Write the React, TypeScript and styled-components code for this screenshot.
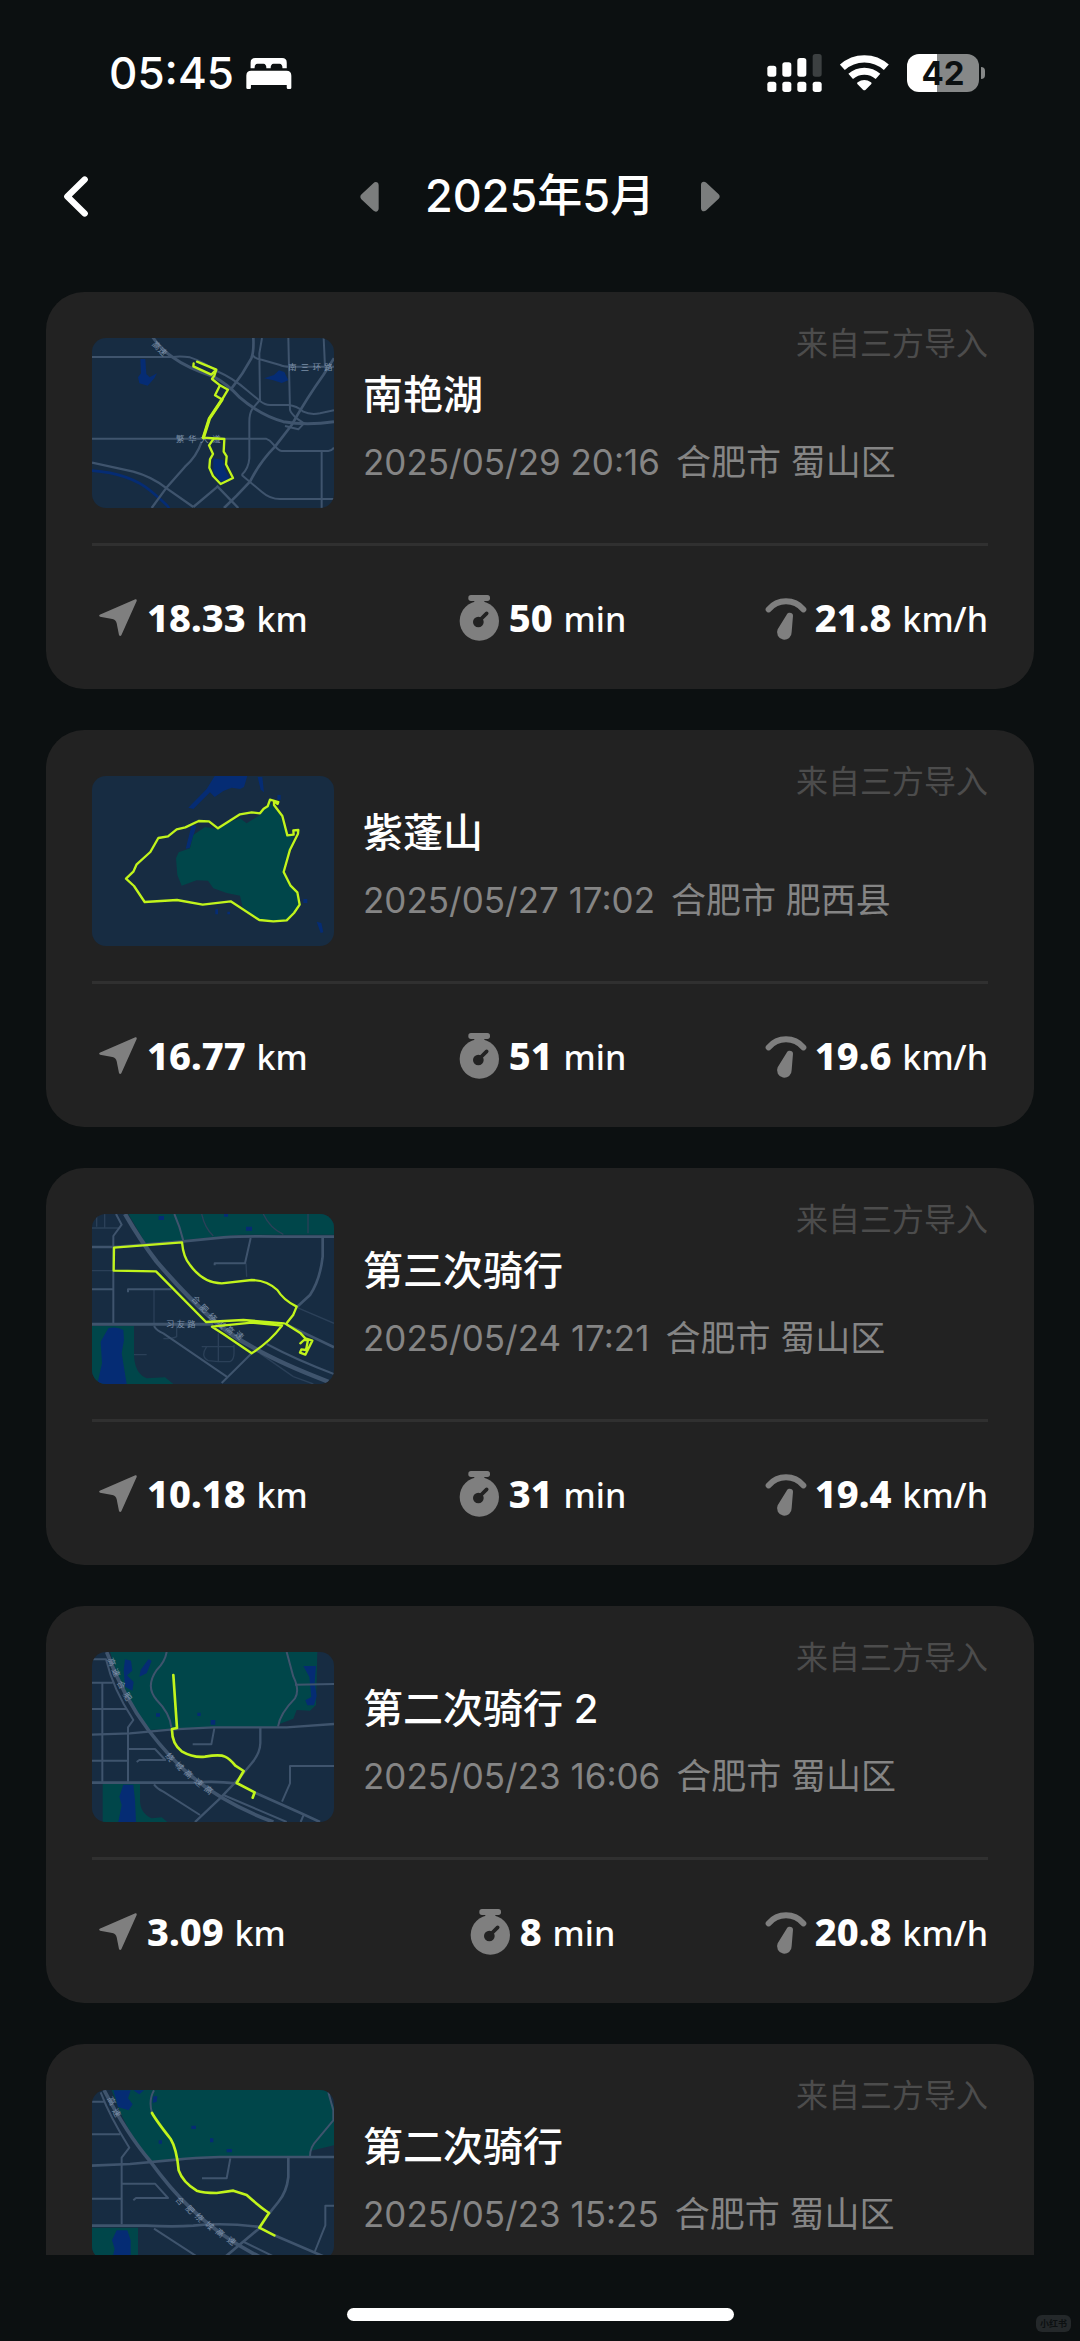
import React from "react";
import styled, { createGlobalStyle } from "styled-components";

const GlobalStyle = createGlobalStyle`
  *, *::before, *::after { box-sizing: border-box; }
  body {
    margin: 0;
    background: #0c1011;
    color: #fff;
    font-family: Inter, "Noto Sans CJK SC", sans-serif;
  }
  h1, h2, p, ul { margin: 0; padding: 0; }
  button { border: 0; background: none; padding: 0; color: inherit; font: inherit; cursor: pointer; }
  svg { display: block; }
`;

const Screen = styled.div`
  display: flex;
  flex-direction: column;
  height: 100vh;
`;

const StatusBar = styled.div`
  display: flex;
  align-items: center;
  justify-content: space-between;
  flex: none;
  height: 146px;
  padding: 0 95px 0 109px;
`;

const StatusGroup = styled.div<{ $gap: number }>`
  display: flex;
  align-items: center;
  gap: ${(p) => p.$gap}px;
`;

const Clock = styled.time`
  font-size: 44px;
  line-height: 56px;
  font-weight: 500;
`;

const Battery = styled.div`
  display: flex;
  align-items: center;
  gap: 2px;
`;

const BatteryBody = styled.div<{ $level: number }>`
  width: 72px;
  height: 38px;
  border-radius: 12px;
  background: linear-gradient(to right, #fff ${(p) => p.$level}%, #868888 ${(p) => p.$level}%);
  color: #0c1011;
  font-size: 33px;
  line-height: 38px;
  font-weight: 700;
  text-align: center;
`;

const BatteryTip = styled.div`
  width: 4px;
  height: 12px;
  border-radius: 0 6px 6px 0;
  background: #868888;
`;

const Header = styled.header`
  display: grid;
  grid-template-columns: 1fr auto 1fr;
  align-items: center;
  flex: none;
  height: 100px;
  padding: 0 46px;
`;

const IconButton = styled.button`
  display: flex;
  align-items: center;
  justify-content: center;
  width: 60px;
  height: 60px;
`;

const MonthNav = styled.div`
  display: flex;
  align-items: center;
  gap: 25px;
`;

const Month = styled.h1`
  font-size: 45px;
  line-height: 60px;
  font-weight: 500;
`;

const RideList = styled.ul`
  flex: 1;
  min-height: 0;
  overflow-y: auto;
  scrollbar-width: none;
  list-style: none;
  display: flex;
  flex-direction: column;
  gap: 41px;
  padding: 46px 46px 0;
`;

const Card = styled.li`
  flex: none;
  padding: 32px 46px 0;
  border-radius: 38px;
  background: #222;
`;

const CardTop = styled.div`
  display: flex;
  gap: 29px;
  padding-bottom: 35px;
  border-bottom: 3px solid #303030;
`;

const MapThumb = styled.svg`
  flex: none;
  width: 242px;
  height: 170px;
  margin-top: 14px;
  border-radius: 14px;
  background: #172c42;
`;

const MapLabel = styled.text`
  fill: #7d90a8;
  font-family: "Noto Sans CJK SC", sans-serif;
  font-size: 25px;
`;

const Info = styled.div`
  flex: 1;
  display: flex;
  flex-direction: column;
`;

const Source = styled.p`
  align-self: flex-end;
  color: #4c4c4c;
  font-size: 32px;
  line-height: 40px;
`;

const RideName = styled.h2`
  font-size: 40px;
  line-height: 62px;
  font-weight: 500;
`;

const Meta = styled.p`
  display: flex;
  gap: 16px;
  color: #858585;
  font-size: 35px;
  line-height: 72px;
  font-weight: 400;
`;

const Stats = styled.div`
  display: grid;
  grid-template-columns: repeat(3, 1fr);
  align-items: center;
  height: 143px;
`;

const Stat = styled.div<{ $align: string }>`
  display: flex;
  align-items: center;
  justify-content: ${(p) => p.$align};
  gap: 7px;
  font-family: "Noto Sans", sans-serif;
  font-size: 34px;
  line-height: 48px;
  font-weight: 500;
  white-space: pre;
`;

const Value = styled.strong`
  margin-right: 2px;
  font-size: 38px;
  font-weight: 800;
`;

const Footer = styled.footer`
  display: grid;
  grid-template-columns: 1fr 387px 1fr;
  align-items: end;
  flex: none;
  height: 86px;
  padding: 0 9px;
`;

const HomeIndicator = styled.div`
  grid-column: 2;
  height: 13px;
  margin-bottom: 20px;
  border-radius: 7px;
  background: #fff;
`;

const Watermark = styled.span`
  justify-self: end;
  margin-bottom: 9px;
  padding: 0 4px;
  border-radius: 6px;
  background: #24282a;
  color: #0c1011;
  font-size: 9px;
  line-height: 17px;
  font-weight: 700;
`;

const BedIcon = () => (
  <svg width="46" height="33" viewBox="620 114 140 98" fill="#fff" aria-hidden="true">
    <path d="M634 147v-17q0-14 14-14h82q14 0 14 14v17h-13q0-14-9-14h-18q-9 0-9 14h-13q0-14-9-14h-18q-9 0-9 14z" />
    <path d="M621 206v-36q0-15 15-15h107q15 0 15 15v36q0 4-4 4h-6q-4 0-4-4v-8H635v8q0 4-4 4h-6q-4 0-4-4z" />
  </svg>
);

const SignalIcon = () => (
  <svg width="55" height="38" viewBox="620 100 165 114" fill="#fff" aria-hidden="true">
    <rect x="621" y="135" width="27" height="33" rx="8" />
    <rect x="666" y="125" width="27" height="43" rx="8" />
    <rect x="711" y="112" width="27" height="56" rx="8" />
    <rect x="757" y="100" width="27" height="68" rx="8" fill="#3c4041" />
    <rect x="621" y="183" width="27" height="31" rx="8" />
    <rect x="666" y="183" width="27" height="31" rx="8" />
    <rect x="711" y="183" width="27" height="31" rx="8" />
    <rect x="757" y="183" width="27" height="31" rx="8" />
  </svg>
);

const WifiIcon = () => (
  <svg width="49" height="38" viewBox="840 100 147 114" fill="none" aria-hidden="true">
    <path d="M847 140A98 98 0 0 1 979 140" stroke="#fff" strokeWidth="22" />
    <path d="M872 167A62 62 0 0 1 954 167" stroke="#fff" strokeWidth="21" />
    <path d="M909 207L892 190Q890 187 893 185A36 36 0 0 1 933 185Q936 187 934 190L917 207Q913 211 909 207Z" fill="#fff" />
  </svg>
);

const BackIcon = () => (
  <svg width="24" height="41" viewBox="70 470 72 122" fill="none" aria-hidden="true">
    <path d="M132 480L80 531L132 582" stroke="#fff" strokeWidth="19" strokeLinecap="round" strokeLinejoin="round" />
  </svg>
);

const PrevIcon = () => (
  <svg width="19" height="31" viewBox="964 476 57 92" fill="#7b7d7d" aria-hidden="true">
    <path d="M1020 488v70c0 10-10 12-16 6l-36-34c-4-4-4-10 0-14l36-34c6-6 16-4 16 6z" />
  </svg>
);

const NextIcon = () => (
  <svg width="19" height="31" viewBox="427 484 57 92" fill="#7b7d7d" aria-hidden="true">
    <path d="M427 495v70c0 10 10 12 16 6l37-34c4-4 4-10 0-14l-37-34c-6-6-16-4-16 6z" />
  </svg>
);

const DistanceIcon = () => (
  <svg width="48" height="48" viewBox="156 942 144 144" fill="#7f7f7f" aria-hidden="true">
    <path d="M179 1004L286 958Q292 957 290 963L244 1066Q240 1071 237 1065L230 1030Q228 1019 217 1017L180 1010Q175 1007 179 1004Z" />
  </svg>
);

const TimerIcon = () => (
  <svg width="48" height="48" viewBox="1251 942 144 144" aria-hidden="true">
    <rect x="1294" y="945" width="65" height="18" rx="8" fill="#7f7f7f" />
    <path d="M1312 960H1342V975H1312Z" fill="#7f7f7f" />
    <circle cx="1327" cy="1023" r="59" fill="#7f7f7f" />
    <circle cx="1324" cy="1026" r="16" fill="#222" />
    <path d="M1326 1023L1349 1000" stroke="#222" strokeWidth="11" strokeLinecap="round" />
  </svg>
);

const SpeedIcon = () => (
  <svg width="48" height="48" viewBox="594 942 144 144" aria-hidden="true">
    <path d="M620 988A68 68 0 0 1 724 988" fill="none" stroke="#7f7f7f" strokeWidth="18" strokeLinecap="round" />
    <path d="M674 1004C678 995 694 998 693 1007L689 1056A22 22 0 1 1 647 1048Z" fill="#7f7f7f" />
  </svg>
);

const ROAD = "#3f546d";
const MINOR = "#2b4058";
const WATER = "#052c74";
const PARK = "#00464a";
const ROUTE = "#c1f41c";

const Roads = ({ d, w, color = ROAD }: { d: string; w: number; color?: string }) => (
  <path d={d} fill="none" stroke={color} strokeWidth={w} strokeLinejoin="round" />
);

const Route = ({ d, w = 8 }: { d: string; w?: number }) => (
  <path d={d} fill="none" stroke={ROUTE} strokeWidth={w} strokeLinejoin="round" strokeLinecap="round" />
);

const ExpresswayLabel = ({ chars, points }: { chars: string; points: number[][] }) => (
  <>
    {points.map(([x, y, angle], i) => (
      <MapLabel key={i} x={x} y={y + 9} textAnchor="middle" transform={`rotate(${angle} ${x} ${y})`}>
        {chars[i]}
      </MapLabel>
    ))}
  </>
);

const NanyanLakeMap = () => (
  <MapThumb viewBox="36 39 726 510" role="img" aria-label="南艳湖路线">
    <path d="M181 102h15l3 45l10 10l22-12l-8 15l-20 22l-25-7l-4-18l9-12z" fill={WATER} />
    <path d="M552 160l30-10l15-14l16 5l12 25l-20 8l-25-8z" fill={WATER} />
    <path d="M400 400l30 5l5 30l15 28l-28 8l-22-30z" fill={WATER} />
    <Roads w={8} color={WATER} d="M36 437Q150 445 215 500T262 549" />
    <Roads w={6} d="M36 96H278M278 96Q300 92 330 97Q370 110 410 138Q460 160 500 195L540 228Q555 240 570 240H625Q650 242 670 260Q690 270 720 265L762 256" />
    <Roads w={9} d="M218 36Q240 70 278 97Q320 128 400 155Q440 175 480 218Q540 270 610 290Q680 302 762 290" />
    <Roads w={8} d="M520 39Q522 80 514 100Q490 145 455 190M762 100L730 150Q680 220 635 300L585 365Q540 410 510 470L470 512L432 549" />
    <Roads w={6} d="M546 39L538 85L540 225L518 250Q508 265 508 290V400Q506 430 485 450M518 90Q525 102 545 104L600 120Q610 125 630 125H762M625 39L630 255Q633 265 650 280L672 295L655 313L615 303M731 39L735 125" />
    <Roads w={6} d="M36 341H558Q570 345 580 358Q595 377 605 378H745Q755 378 762 368M725 378V549M485 450L545 500Q570 522 600 522H762" />
    <Roads w={7} d="M36 413Q90 425 160 440Q215 455 260 490L340 546M365 350Q350 395 315 425L258 490L215 549M410 487L340 546M410 482L475 549" />
    <MapLabel x="625 662 698 733" y="134">南三环路</MapLabel>
    <MapLabel x="288 325 361 397" y="350">繁华大道</MapLabel>
    <ExpresswayLabel chars="高速" points={[[230, 62, 45], [248, 80, 45]]} />
    <Route w={7} d="M351 110L409 134L403 152L396 162L420 181L444 194L426 224L388 281L370 338L433 342L431 380L440 394L438 418L459 459L422 477L399 453L388 428L390 403L399 387L387 361L399 344M341 115L340 124L394 149L409 134M420 181L405 211L424 222" />
    <Route w={10} d="M426 224L388 281L370 338" />
  </MapThumb>
);

const ZipengMountainMap = () => (
  <MapThumb viewBox="36 33 726 510" role="img" aria-label="紫蓬山路线">
    <path d="M404 33H502L492 66L480 72L455 68L430 78L404 96L390 82L340 132L325 128L380 72Z" fill={WATER} />
    <path d="M533 36h14l5 46l-10-8zM335 180l14 4l-20 65l-12 2zM710 470l14 4l6 28l-8 2zM406 432h8v16h-8zM442 440h8v8h-8zM670 402h12v12h-12zM592 90h10v14h-10z" fill={WATER} />
    <path d="M570 112L600 150L620 210L640 212L612 322L632 362L652 382L658 420L620 466L580 469L538 465L488 426L480 392L440 384L400 370L384 347L350 346L305 362L292 330L288 280L296 262L330 250L340 210L375 186L412 192L440 175L480 160L500 175L540 150Z" fill={PARK} />
    <Route w={7} d="M570 104L595 111L593 117L582 108V120L607 153L622 211L641 209L640 196L655 195L654 206L630 254L611 321L631 361L652 382L659 419L642 444L620 466L580 469L538 465L452 409L368 419L291 405L194 411L162 363L138 341L160 320L170 298L211 261L235 219L264 214L290 193L316 187L356 168L387 169L414 190L480 148L515 142L540 145L551 131L563 124Z" />
  </MapThumb>
);

const ThirdRideMap = () => (
  <MapThumb viewBox="36 42 726 510" role="img" aria-label="第三次骑行路线">
    <path d="M145 42H762V104H480L310 120L200 136Z" fill={PARK} />
    <path d="M36 378H162V460Q162 520 200 535L255 532L280 552H36Z" fill={PARK} />
    <path d="M85 385Q110 378 130 390L132 420L125 460L140 552H52L66 490L62 425Z" fill={WATER} />
    <path d="M236 48h16v12h-16zM498 80h18v12h-18zM432 42h12v8h-12z" fill={WATER} />
    <Roads w={4} color={MINOR} d="M365 42Q375 85 400 108M550 42Q570 85 610 103M684 42V100M36 84H115M74 42V84M50 42V80M36 212H100M222 268V372M162 464H200M290 370V410Q280 416 250 416M365 440H462M415 400V485H450Q462 480 462 460V435M380 440Q360 470 385 482L415 485M650 322L762 370M498 190L500 230M540 460L640 530L700 552" />
    <Roads w={8} d="M36 141H103L310 124L430 112Q500 108 600 110H762" />
    <Roads w={13} d="M135 42Q180 120 230 185Q320 290 400 360Q450 405 515 440Q600 490 745 545" />
    <Roads w={6} d="M108 42L125 74L100 108V370M36 268H100M144 277V268H275M283 42Q300 80 310 122M404 196V190H495L512 114M222 378Q230 392 250 400L440 530M515 460L425 549M560 432Q650 480 762 522" />
    <Roads w={8} d="M728 114V170Q720 240 690 285L650 322M620 374L762 442" />
    <Roads w={9} d="M36 373H400" />
    <MapLabel x="258 290 322" y="381">习友路</MapLabel>
    <ExpresswayLabel chars="合肥绕城高速" points={[[348, 300, 45], [372, 326, 45], [398, 352, 45], [424, 374, 45], [450, 390, 45], [478, 406, 45]]} />
    <Route w={7} d="M102 143L306 127Q310 172 330 195Q370 250 425 250Q470 245 515 240Q560 240 592 270Q610 300 650 320L640 344L618 372L662 400L676 415L697 422L676 464L660 458L664 448L678 450L684 420L672 420L661 430M102 143L101 212L228 214L378 366L490 360L612 370M396 380L515 368L606 377Q570 425 515 460L430 402Z" />
  </MapThumb>
);

const SecondRideTwoMap = () => (
  <MapThumb viewBox="36 36 726 510" role="img" aria-label="第二次骑行 2 路线">
    <path d="M90 36H712L708 195L690 212L650 210L640 236L598 252L590 262L400 262L205 270Q130 170 90 36Z" fill={PARK} />
    <path d="M68 432H180V480Q180 520 215 535L245 532L262 546H68Z" fill={PARK} />
    <path d="M130 434H160L165 480L168 546H115L125 495L118 470Z" fill={WATER} />
    <path d="M135 58l18 4l4 30l-16 14l20 20l-4 26l-22-12l-4-50zM205 58l10 4l-15 38l-22 10l4-20zM670 78h38l-4 50l6 40l-8 28h-20l-6-15l18-10l-6-60zM228 220h12v10h-12zM392 240h14v14h-14zM352 218h10v10h-10z" fill={WATER} />
    <Roads w={6} d="M36 58H78Q100 150 160 240L144 262V425M36 128H98M36 207H142M67 128V425M36 362H144M144 327H225L256 360H178L170 366M338 313H394L403 265M260 36Q255 65 230 90Q195 140 230 180Q270 220 274 262M620 36L640 110Q660 150 645 175Q600 220 594 260M645 134L762 132M762 378H630V430L606 485M222 433Q230 445 250 455L360 525M430 465L540 512L620 546M672 522L662 546" />
    <Roads w={7} d="M36 284L150 280L280 268L400 262H620L762 252M541 265V310Q540 340 515 370L480 412L420 475L345 546" />
    <Roads w={11} d="M80 36Q130 170 205 270Q270 355 330 405Q430 490 580 546" />
    <Roads w={8} d="M36 428H340Q400 422 470 430M520 456L660 518L720 546" />
    <ExpresswayLabel chars="高速合肥绕城高速高" points={[[95, 66, 68], [108, 98, 66], [124, 134, 62], [142, 170, 60], [270, 352, 50], [298, 378, 48], [326, 402, 45], [356, 428, 40], [386, 450, 38]]} />
    <Route d="M280 105L291 264L276 267Q275 310 305 334Q340 354 375 350Q420 342 435 350Q450 357 466 377L491 393L470 429L524 457L518 473" />
  </MapThumb>
);

const SecondRideMap = () => (
  <MapThumb viewBox="36 29 726 510" role="img" aria-label="第二次骑行路线">
    <path d="M95 29H740L762 80V195L690 212V228L400 230L210 242Q130 140 95 29Z" fill={PARK} />
    <path d="M36 442H174V539H36Z" fill={PARK} />
    <path d="M110 450H142L152 480V539H96L104 505L96 480Z" fill={WATER} />
    <path d="M100 30h52l-8 24l14 18l-12 18l-32-10zM160 30h32l-14 12zM220 48h12l-2 16l-12 4zM334 136h14v10h-14zM390 174h10v12h-10zM440 206h16v10h-16zM236 180h10v10h-10z" fill={WATER} />
    <Roads w={6} d="M36 64H72M62 36Q90 110 148 202L125 232V432M36 162H120M36 355H125M125 310H225L264 353H168L160 360M366 294H440L451 234M222 30Q205 60 216 98M745 36L760 90V120L710 180Q690 200 690 228M762 376H736V435L704 515M222 445L350 528M492 485L580 528" />
    <Roads w={8} d="M36 256L150 251L290 238Q340 232 420 230L762 230M625 232V290Q620 335 595 365L567 400M540 442L435 530M36 436H200Q280 440 340 436Q430 426 540 440M583 465L735 530" />
    <Roads w={11} d="M72 29Q140 160 210 242Q270 325 330 382Q420 470 540 530" />
    <ExpresswayLabel chars="高速合肥绕城高速" points={[[95, 62, 62], [110, 97, 62], [300, 362, 50], [330, 388, 46], [358, 412, 45], [388, 436, 42], [420, 458, 40], [454, 482, 38]]} />
    <Route d="M216 98Q228 120 272 176Q290 205 296 270Q308 305 350 331Q370 338 410 338L460 331L500 344Q540 380 567 398L538 442L583 465" />
  </MapThumb>
);

interface RideStats {
  distance: string;
  minutes: string;
  speed: string;
}

interface Ride {
  name: string;
  time: string;
  city: string;
  district: string;
  stats?: RideStats;
  map: React.ComponentType;
}

const rides: Ride[] = [
  { name: "南艳湖", time: "2025/05/29 20:16", city: "合肥市", district: "蜀山区", stats: { distance: "18.33", minutes: "50", speed: "21.8" }, map: NanyanLakeMap },
  { name: "紫蓬山", time: "2025/05/27 17:02", city: "合肥市", district: "肥西县", stats: { distance: "16.77", minutes: "51", speed: "19.6" }, map: ZipengMountainMap },
  { name: "第三次骑行", time: "2025/05/24 17:21", city: "合肥市", district: "蜀山区", stats: { distance: "10.18", minutes: "31", speed: "19.4" }, map: ThirdRideMap },
  { name: "第二次骑行 2", time: "2025/05/23 16:06", city: "合肥市", district: "蜀山区", stats: { distance: "3.09", minutes: "8", speed: "20.8" }, map: SecondRideTwoMap },
  { name: "第二次骑行", time: "2025/05/23 15:25", city: "合肥市", district: "蜀山区", map: SecondRideMap },
];

const RideCard = ({ ride }: { ride: Ride }) => {
  const RideMap = ride.map;
  return (
    <Card>
      <CardTop>
        <RideMap />
        <Info>
          <Source>来自三方导入</Source>
          <RideName>{ride.name}</RideName>
          <Meta>
            <time>{ride.time}</time>
            <span>{ride.city} {ride.district}</span>
          </Meta>
        </Info>
      </CardTop>
      {ride.stats && (
        <Stats>
          <Stat $align="flex-start">
            <DistanceIcon />
            <span><Value>{ride.stats.distance}</Value> km</span>
          </Stat>
          <Stat $align="center">
            <TimerIcon />
            <span><Value>{ride.stats.minutes}</Value> min</span>
          </Stat>
          <Stat $align="flex-end">
            <SpeedIcon />
            <span><Value>{ride.stats.speed}</Value> km/h</span>
          </Stat>
        </Stats>
      )}
    </Card>
  );
};

export default function App() {
  return (
    <>
      <GlobalStyle />
      <Screen>
        <StatusBar>
          <StatusGroup $gap={12}>
            <Clock>05:45</Clock>
            <BedIcon />
          </StatusGroup>
          <StatusGroup $gap={18}>
            <SignalIcon />
            <WifiIcon />
            <Battery>
              <BatteryBody $level={42}>42</BatteryBody>
              <BatteryTip />
            </Battery>
          </StatusGroup>
        </StatusBar>
        <Header>
          <IconButton type="button" aria-label="返回"><BackIcon /></IconButton>
          <MonthNav>
            <IconButton type="button" aria-label="上个月"><PrevIcon /></IconButton>
            <Month>2025年5月</Month>
            <IconButton type="button" aria-label="下个月"><NextIcon /></IconButton>
          </MonthNav>
        </Header>
        <RideList>
          {rides.map((ride) => <RideCard key={ride.name} ride={ride} />)}
        </RideList>
        <Footer>
          <HomeIndicator />
          <Watermark>小红书</Watermark>
        </Footer>
      </Screen>
    </>
  );
}
